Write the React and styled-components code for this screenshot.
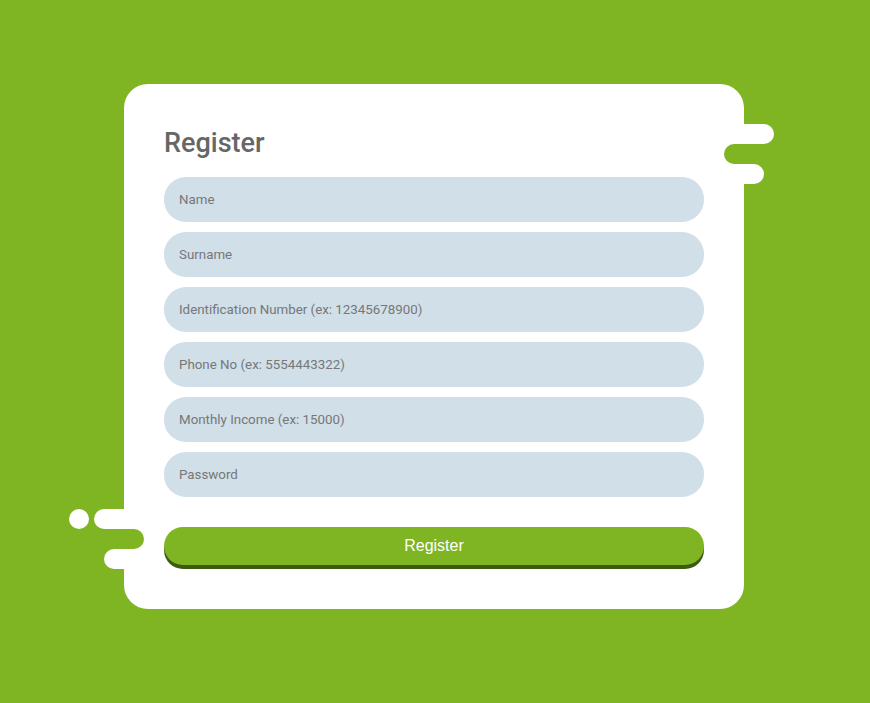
import styled, { createGlobalStyle } from 'styled-components';

const GlobalStyle = createGlobalStyle`
    html, body {
        margin: 0;
        background: #7fb522;
        font-family: Roboto, "Liberation Sans", sans-serif;
    }
`

const Page = styled.div`
    min-height: 703px;
    padding: 84px 0 0 124px;
    box-sizing: border-box;
`

const Card = styled.form`
    position: relative;
    width: 620px;
    box-sizing: border-box;
    padding: 40px 40px 44px;
    background: #fff;
    border-radius: 24px;
    display: flex;
    flex-direction: column;
`

const Title = styled.h2`
    margin: 0 0 15px;
    font-size: 27px;
    line-height: 37px;
    padding-top: 1px;
    font-weight: 500;
    color: #666;
`

const Fields = styled.div`
    display: flex;
    flex-direction: column;
    gap: 10px;
`

const Input = styled.input`
    height: 45px;
    box-sizing: border-box;
    border: none;
    outline: none;
    border-radius: 22px;
    background: #d1dfe8;
    padding: 0 15px;
    font-family: Roboto, sans-serif;
    font-size: 13.33px;
    color: #555;

    &::placeholder {
        color: #777;
    }
`

const Button = styled.button`
    margin-top: 30px;
    height: 38px;
    border: none;
    border-radius: 20px;
    background: #7fb522;
    box-shadow: 0 4px 0 #3d5a12;
    color: #fff;
    font-family: "Liberation Sans", Arial, sans-serif;
    font-size: 16px;
    cursor: pointer;
`

/* decorative pills sticking out of the card edges */
const Deco = styled.div`
    position: absolute;
    display: flex;
    gap: 5px;
    top: ${p => p.top}px;
    left: ${p => p.left}px;
`

const PillStack = styled.div`
    display: flex;
    flex-direction: column;
`

const Pill = styled.span`
    display: block;
    height: 20px;
    border-radius: 10px;
    background: ${p => p.green ? '#7fb522' : '#fff'};
    width: ${p => p.w}px;
    margin-left: ${p => p.shift || 0}px;
`

const Dot = styled.span`
    width: 20px;
    height: 20px;
    border-radius: 50%;
    background: #fff;
`

const fields = [
    'Name',
    'Surname',
    'Identification Number (ex: 12345678900)',
    'Phone No (ex: 5554443322)',
    'Monthly Income (ex: 15000)',
    'Password',
]

const App = () => {
    return (
        <Page>
            <GlobalStyle />
            <Card onSubmit={e => e.preventDefault()}>
                <Deco top={40} left={590}>
                    <PillStack>
                        <Pill w={60} />
                        <Pill green w={40} shift={10} />
                        <Pill w={50} />
                    </PillStack>
                </Deco>

                <Deco top={425} left={-55}>
                    <Dot />
                    <PillStack>
                        <Pill w={60} />
                        <Pill green w={40} shift={10} />
                        <Pill w={50} shift={10} />
                    </PillStack>
                </Deco>

                <Title>Register</Title>
                <Fields>
                    {fields.map(f => (
                        <Input key={f} placeholder={f} type={f === 'Password' ? 'password' : 'text'} />
                    ))}
                </Fields>
                <Button type="submit">Register</Button>
            </Card>
        </Page>
    )
}

export default App;
